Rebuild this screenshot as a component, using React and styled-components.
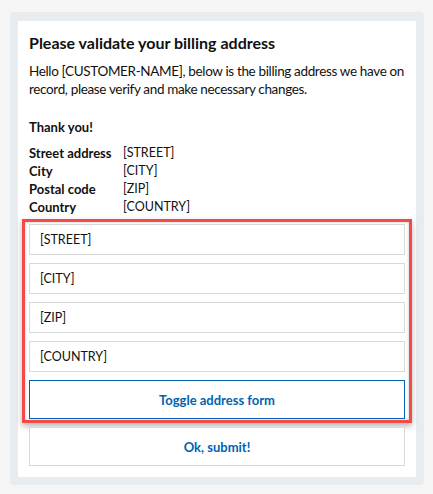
import styled, { createGlobalStyle } from "styled-components";

const GlobalStyle = createGlobalStyle`
  html, body {
    margin: 0;
    background-color: #f5f5f5;
  }
  body {
    padding: 12px 9px 9px 10px;
    font-family: Lato, "Open Sans", sans-serif;
    color: #111;
  }
`;

const Panel = styled.div`
  width: 414px;
  box-sizing: border-box;
  padding: 9px 8px 8px;
  background-color: #e9ecef;
  border-radius: 4px;
`;

const Card = styled.div`
  background-color: #fff;
  padding: 12px 11px 11px;
  display: flex;
  flex-direction: column;
`;

const Title = styled.h2`
  margin: 0 0 9px;
  font-size: 16px;
  line-height: 20px;
  font-weight: 700;
`;

const Text = styled.p`
  margin: 0 0 ${(p) => p.$gap || 0}px;
  font-size: ${(p) => (p.$bold ? 13 : 13.5)}px;
  letter-spacing: ${(p) => (p.$bold ? 0 : -0.35)}px;
  line-height: 18px;
  font-weight: ${(p) => (p.$bold ? 700 : 400)};
`;

const Details = styled.dl`
  display: grid;
  grid-template-columns: 94px 1fr;
  margin: 0;
  line-height: 18px;

  & dt {
    font-size: 13px;
    font-weight: 700;
  }
  & dd {
    margin: 0;
    font-size: 12.5px;
  }
`;

const Highlight = styled.div`
  margin: 3px -7px 0;
  padding: 2px 4px 1px;
  border: 3px solid #f34a4a;
  display: flex;
  flex-direction: column;
  gap: 8px;
  box-shadow: 0 3px 6px rgba(0, 0, 0, 0.3), inset 0 0 3px rgba(0, 0, 0, 0.25);
`;

const Field = styled.input`
  box-sizing: border-box;
  height: 31px;
  width: 100%;
  padding: 0 10px;
  border: 1px solid #d9d9d9;
  font-family: inherit;
  font-size: 12.5px;
  color: #111;
  background: #fff;
  outline: none;

  &::placeholder {
    color: #111;
  }
`;

const Button = styled.button`
  box-sizing: border-box;
  height: 39px;
  width: 100%;
  margin-top: ${(p) => p.$offset || 0}px;
  background: #fff;
  border: 1px solid ${(p) => (p.$primary ? "#0063b1" : "#d9d9d9")};
  color: #0063b1;
  font-family: inherit;
  font-size: 13px;
  font-weight: 700;
  cursor: pointer;
`;

const rows = [
  ["Street address", "[STREET]"],
  ["City", "[CITY]"],
  ["Postal code", "[ZIP]"],
  ["Country", "[COUNTRY]"],
];

export default function App() {
  return (
    <>
      <GlobalStyle />
      <Panel>
        <Card>
          <Title>Please validate your billing address</Title>
          <Text $gap={20}>
            Hello [CUSTOMER-NAME], below is the billing address we have on
            record, please verify and make necessary changes.
          </Text>
          <Text $bold $gap={8}>
            Thank you!
          </Text>
          <Details>
            {rows.map(([label, value]) => (
              <>
                <dt key={label}>{label}</dt>
                <dd key={value}>{value}</dd>
              </>
            ))}
          </Details>
          <Highlight>
            {rows.map(([label, value]) => (
              <Field key={label} placeholder={value} aria-label={label} />
            ))}
            <Button $primary>Toggle address form</Button>
          </Highlight>
          <Button $offset={4}>Ok, submit!</Button>
        </Card>
      </Panel>
    </>
  );
}
